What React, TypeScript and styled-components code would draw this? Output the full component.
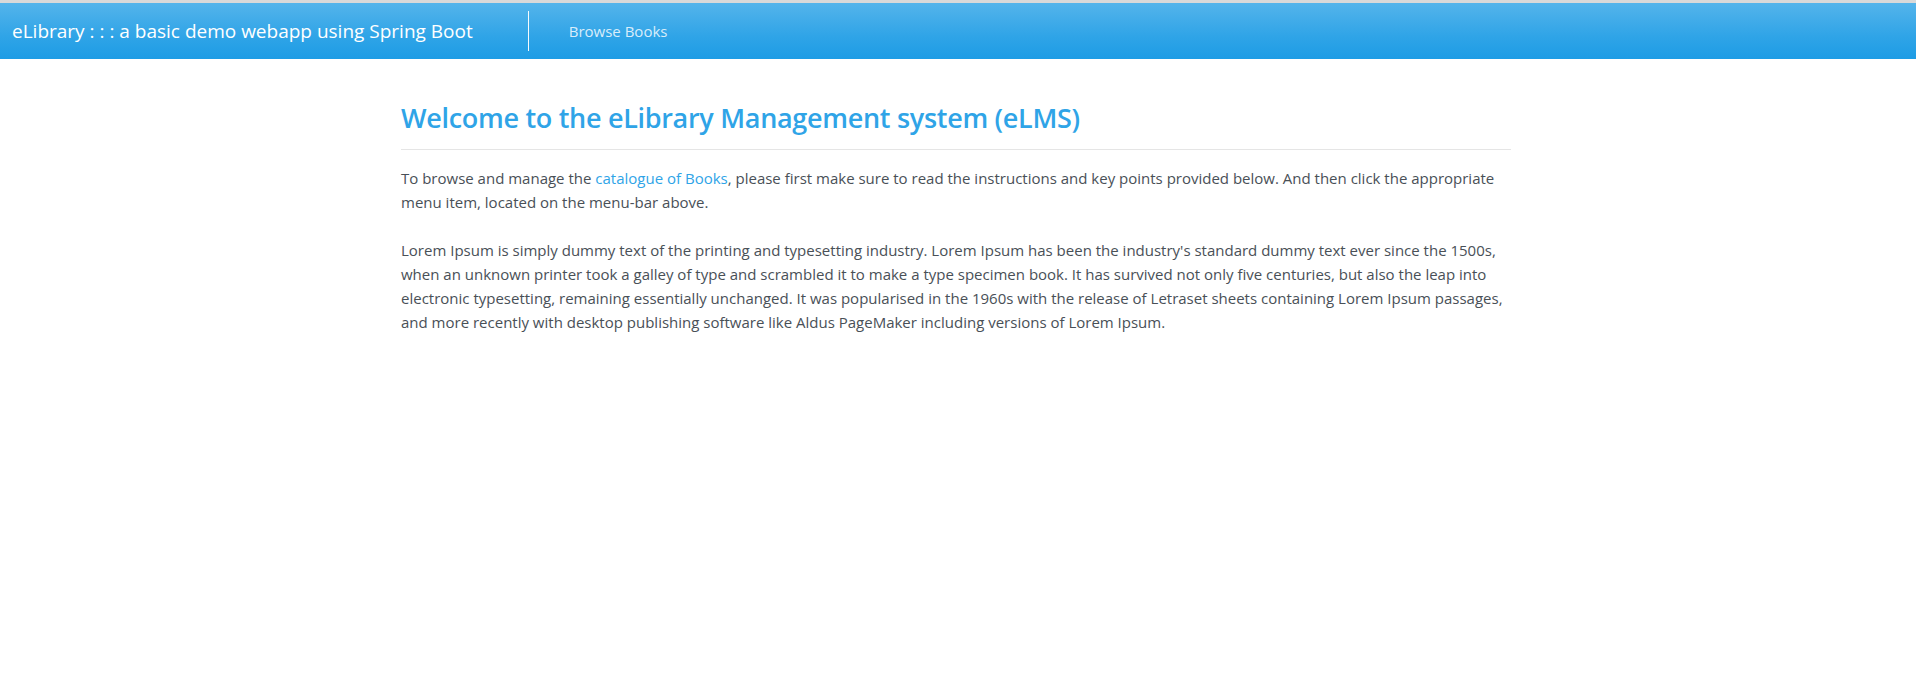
import React from "react";
import styled, { createGlobalStyle } from "styled-components";

const GlobalStyle = createGlobalStyle`
  html, body { margin: 0; padding: 0; background: #fff; }
  body {
    font-family: "Open Sans", "Noto Sans", "Liberation Sans", sans-serif;
    color: #495057;
  }
`;

const Page = styled.div`
  border-top: 3px solid #d9d9d9;
  min-height: 676px;
`;

const NavBar = styled.nav`
  display: flex;
  align-items: center;
  height: 56px;
  padding: 0 12px;
  background-image: linear-gradient(#54b4eb, #2fa4e7 60%, #1d9ce5);
`;

const Brand = styled.a`
  font-size: 19px;
  color: #fff;
  text-decoration: none;
  white-space: nowrap;
  padding-right: 55px;
  border-right: 1px solid rgba(255, 255, 255, 0.95);
  line-height: 40px;
`;

const NavLink = styled.a`
  font-size: 15px;
  color: rgba(255, 255, 255, 0.82);
  text-decoration: none;
  margin-left: 40px;
`;

const Container = styled.main`
  width: 1110px;
  margin: 0 auto;
  padding-top: 41px;
  transform: translateX(-2px);
`;

const Title = styled.h3`
  margin: 0;
  font-size: 27px;
  font-weight: 600;
  letter-spacing: -0.3px;
  line-height: 36px;
  color: #2fa4e7;
`;

const Rule = styled.hr`
  margin: 13px 0 16px;
  border: 0;
  border-top: 1px solid #e5e5e5;
`;

const Para = styled.p`
  margin: 0 0 24px;
  font-size: 15px;
  line-height: 24px;
  color: #495057;
`;

const Link = styled.a`
  color: #2fa4e7;
  text-decoration: none;
`;

export default function App() {
  return (
    <>
      <GlobalStyle />
      <Page>
        <NavBar>
          <Brand href="#">eLibrary : : : a basic demo webapp using Spring Boot</Brand>
          <NavLink href="#">Browse Books</NavLink>
        </NavBar>
        <Container>
          <Title>Welcome to the eLibrary Management system (eLMS)</Title>
          <Rule />
          <Para>
            To browse and manage the <Link href="#">catalogue of Books</Link>, please first make sure to read the
            instructions and key points provided below. And then click the appropriate menu item, located on the
            menu-bar above.
          </Para>
          <Para>
            Lorem Ipsum is simply dummy text of the printing and typesetting industry. Lorem Ipsum has been the
            industry's standard dummy text ever since the 1500s, when an unknown printer took a galley of type and
            scrambled it to make a type specimen book. It has survived not only five centuries, but also the leap
            into electronic typesetting, remaining essentially unchanged. It was popularised in the 1960s with the
            release of Letraset sheets containing Lorem Ipsum passages, and more recently with desktop publishing
            software like Aldus PageMaker including versions of Lorem Ipsum.
          </Para>
        </Container>
      </Page>
    </>
  );
}
